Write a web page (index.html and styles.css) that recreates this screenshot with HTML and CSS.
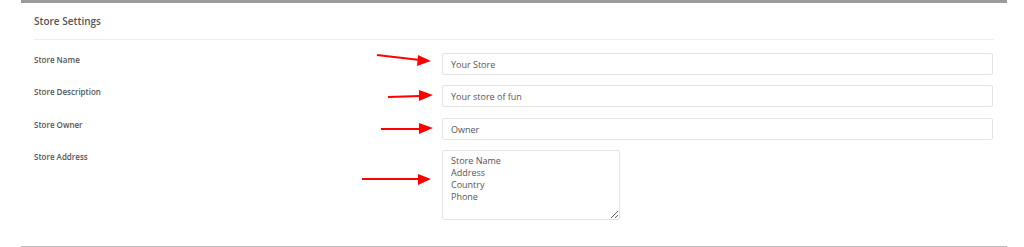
FILE: index.html
```html
<!DOCTYPE html>
<html lang="en">
<head>
    <meta charset="UTF-8">
    <title>Store Settings</title>
    <link rel="stylesheet" href="styles.css">
</head>
<body>
    <div class="panel">
        <h3 class="panel-title">Store Settings</h3>
        <form class="settings">
            <label class="row-label">Store Name</label>
            <div class="row-field"><input type="text" value="Your Store"></div>

            <label class="row-label">Store Description</label>
            <div class="row-field"><input type="text" value="Your store of fun"></div>

            <label class="row-label owner-row">Store Owner</label>
            <div class="row-field owner-row"><input type="text" value="Owner"></div>

            <label class="row-label">Store Address</label>
            <div class="row-field"><textarea>Store Name
Address
Country
Phone</textarea></div>
        </form>
    </div>

    <!-- red annotation arrows drawn over the form -->
    <svg class="arrows" width="1024" height="247" viewBox="0 0 1024 247">
        <g stroke="#f00" stroke-width="2" fill="#f00">
            <line x1="377" y1="55" x2="420" y2="60"/>
            <polygon points="431,61 418,55 417,66" stroke="none"/>
            <line x1="388" y1="97" x2="420" y2="96"/>
            <polygon points="433,95 419,90 419,101" stroke="none"/>
            <line x1="381" y1="129" x2="420" y2="129"/>
            <polygon points="433,128 419,123 419,134" stroke="none"/>
            <line x1="362" y1="179" x2="420" y2="179"/>
            <polygon points="431,179 418,174 418,185" stroke="none"/>
        </g>
    </svg>
</body>
</html>
```

FILE: styles.css
```css
body {
    margin: 0;
    font-family: "Open Sans", sans-serif;
    color: #555;
    background: #fff;
}
.panel {
    margin: 0 17px 0 21px;
    border-top: 3px solid #9a9a9a;
    border-bottom: 1px solid #bbb;
    padding: 0 13px;
    height: 243px;
}
.panel-title {
    margin: 0;
    padding: 11px 0 10px;
    font-size: 10px;
    font-weight: 600;
    line-height: 15px;
    border-bottom: 1px solid #eee;
}
.settings {
    display: grid;
    grid-template-columns: 408px 551px;
    row-gap: 10px;
    padding-top: 13px;
}
.owner-row {
    margin-top: 1px;
}
.row-label {
    font-size: 8px;
    font-weight: 600;
    line-height: 12px;
    padding-top: 1px;
}
.row-field input,
.row-field textarea {
    box-sizing: border-box;
    display: block;
    font-family: "Open Sans", sans-serif;
    font-size: 9px;
    color: #555;
    border: 1px solid #e4e4e4;
    border-radius: 2px;
    padding: 0 8px;
    margin: 0;
}
.row-field input {
    width: 551px;
    height: 22px;
}
.row-field textarea {
    width: 178px;
    height: 70px;
    padding: 4px 8px;
    line-height: 12px;
    resize: vertical;
}
.arrows {
    position: absolute;
    left: 0;
    top: 0;
    pointer-events: none;
}
```
